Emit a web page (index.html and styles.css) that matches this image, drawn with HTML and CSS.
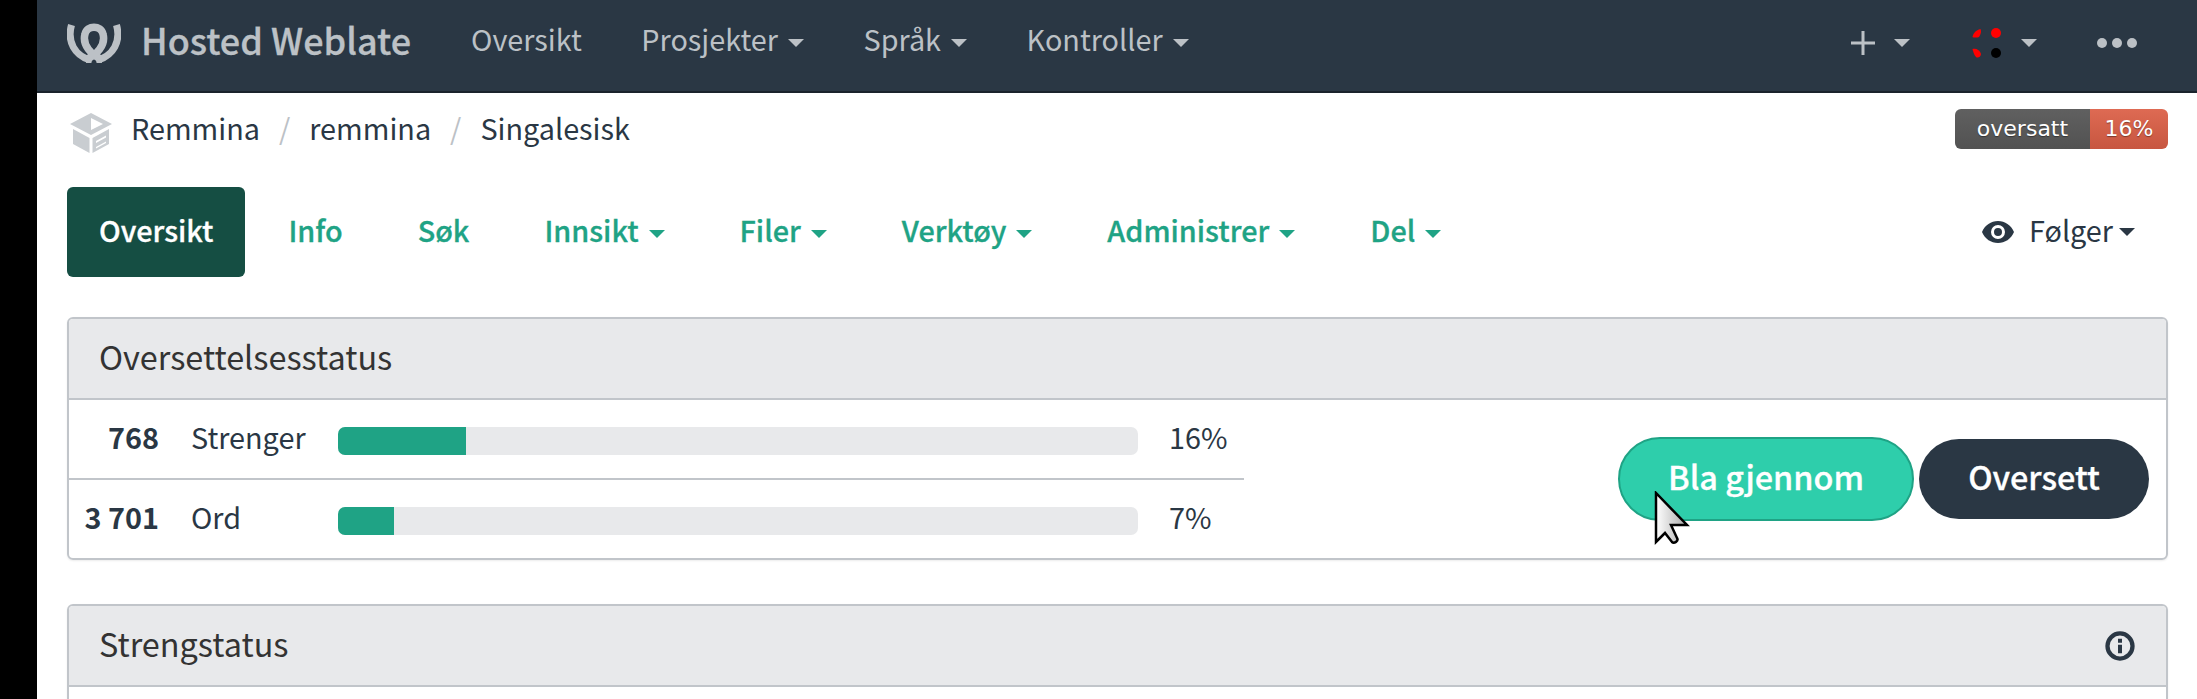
FILE: index.html
```html
<!DOCTYPE html>
<html lang="nb">
<head>
  <meta charset="UTF-8" />
  <title>Singalesisk - remmina - Hosted Weblate</title>
  <link rel="stylesheet" href="styles.css">
</head>
<body>
  <div class="page">
    <nav class="navbar">
      <a class="brand">
        <svg class="brand-logo" viewBox="0 0 54 40" width="54" height="40">
          <g fill="none" stroke="#bcc1c6" stroke-linecap="butt">
            <path d="M4.500 2C0 18 7 33 25 37.500" stroke-width="7"/>
            <path d="M49.500 2C54 18 47 33 29 37.500" stroke-width="7"/>
            <path d="M36 37C24 32 15 22 18 11C20 2 34 2 36 11C39 22 30 32 18 37" stroke-width="7.500"/>
          </g>
        </svg>
        <span>Hosted Weblate</span>
      </a>
      <ul class="nav-links">
        <li>Oversikt</li>
        <li>Prosjekter<i class="caret"></i></li>
        <li>Språk<i class="caret"></i></li>
        <li>Kontroller<i class="caret"></i></li>
      </ul>
      <div class="nav-right">
        <div class="nav-add">
          <svg viewBox="0 0 24 24" width="24" height="24"><path d="M10.500 0h3v10.500H24v3H13.500V24h-3V13.500H0v-3h10.500z" fill="#bcc1c6"/></svg>
          <i class="caret"></i>
        </div>
        <div class="nav-user">
          <svg viewBox="0 0 30 30" width="30" height="30">
            <path d="M8.500 1C9.500 3 9 6 7 9C5 10 1 9.500 0.500 9C1 5.500 4 2 8.500 1Z" fill="#f00"/>
            <circle cx="24" cy="5" r="5" fill="#f00"/>
            <path d="M0.500 21C4 20 8 22 9 26C8.500 30 5 30 4 29C2 27 1 23 0.500 21Z" fill="#f00"/>
            <circle cx="24" cy="25" r="5" fill="#000"/>
          </svg>
          <i class="caret"></i>
        </div>
        <div class="nav-dots"><b></b><b></b><b></b></div>
      </div>
    </nav>

    <div class="crumbs">
      <svg class="crumb-icon" viewBox="0 0 42 40" width="42" height="40">
        <path d="M21 0L42 11L21 22L0 11Z M21 5V17L33 11Z" fill="#c9cdd1" fill-rule="evenodd"/>
        <path d="M3 16L19.500 25V40L3 31Z" fill="#c9cdd1"/>
        <path d="M22.500 25L39 16V31L22.500 40Z M26 28V30L36 24.500V22.500Z M26 34V35.500L36 30V28.500Z" fill="#c9cdd1" fill-rule="evenodd"/>
      </svg>
      <span>Remmina</span><em>/</em><span>remmina</span><em>/</em><span>Singalesisk</span>
      <div class="badge"><span class="badge-label">oversatt</span><span class="badge-value">16%</span></div>
    </div>

    <div class="tabs">
      <a class="tab active"><span>Oversikt</span></a>
      <a class="tab"><span>Info</span></a>
      <a class="tab"><span>Søk</span></a>
      <a class="tab"><span>Innsikt</span><i class="caret"></i></a>
      <a class="tab"><span>Filer</span><i class="caret"></i></a>
      <a class="tab"><span>Verktøy</span><i class="caret"></i></a>
      <a class="tab"><span>Administrer</span><i class="caret"></i></a>
      <a class="tab"><span>Del</span><i class="caret"></i></a>
      <div class="watch">
        <svg viewBox="0 0 32 22" width="32" height="22"><path d="M16 0C9 0 3 4 0 11c3 7 9 11 16 11s13-4 16-11C29 4 23 0 16 0zm0 18a7 7 0 1 1 0-14 7 7 0 0 1 0 14zm0-11a4 4 0 1 0 0 8 4 4 0 0 0 0-8z" fill="#2a3744"/></svg>
        <span>Følger</span><i class="caret"></i>
      </div>
    </div>

    <section class="panel">
      <h2 class="panel-head"><span>Oversettelsesstatus</span></h2>
      <div class="panel-body">
        <div class="stats">
          <div class="stat-row">
            <b class="stat-num">768</b>
            <span class="stat-name">Strenger</span>
            <div class="bar"><div class="bar-fill" style="width:16%"></div></div>
            <span class="stat-pct">16%</span>
          </div>
          <div class="stat-row">
            <b class="stat-num">3 701</b>
            <span class="stat-name">Ord</span>
            <div class="bar"><div class="bar-fill" style="width:7%"></div></div>
            <span class="stat-pct">7%</span>
          </div>
        </div>
        <div class="actions">
          <a class="btn btn-browse"><span>Bla gjennom</span></a>
          <a class="btn btn-translate"><span>Oversett</span></a>
        </div>
      </div>
    </section>

    <section class="panel panel-open">
      <h2 class="panel-head"><span>Strengstatus</span>
        <svg class="info-icon" viewBox="0 0 24 24" width="32" height="32"><path d="M12 1a11 11 0 1 0 0 22 11 11 0 0 0 0-22zm0 3.200a7.800 7.800 0 1 1 0 15.600 7.800 7.800 0 0 1 0-15.600z" fill="#2a3744" fill-rule="evenodd"/><path d="M10.500 6.500h3v3h-3zM10.500 11h3v6.500h-3z" fill="#2a3744"/></svg>
      </h2>
    </section>
  </div>

  <svg class="cursor" viewBox="0 0 38 56" width="38" height="56">
    <defs><linearGradient id="cursor-fill" x1="0" y1="0" x2="1" y2="0"><stop offset="0" stop-color="#fff"/><stop offset="1" stop-color="#aaa"/></linearGradient></defs>
    <path d="M2 2V51L11 42L18 51C20 53 25 50 23 47L17 34H33Z" fill="url(#cursor-fill)" stroke="#000" stroke-width="2.500" stroke-linejoin="miter"/>
  </svg>
</body>
</html>
```

FILE: styles.css
```css
* {
  box-sizing: border-box;
  margin: 0;
  padding: 0;
}

html, body {
  height: 100%;
  overflow: hidden;
}

body {
  background: #000;
  padding-left: 37px;
  font-family: "Noto Sans CJK SC", "Noto Sans", sans-serif;
  font-size: 28.800px;
  line-height: 40px;
  color: #2a3744;
}

.page {
  background: #fff;
  height: 699px;
  overflow: hidden;
}

.caret {
  display: inline-block;
  width: 0;
  height: 0;
  margin-left: 10px;
  vertical-align: 4px;
  border-top: 8px solid currentColor;
  border-left: 8px solid transparent;
  border-right: 8px solid transparent;
}

/* top bar */
.navbar {
  display: flex;
  align-items: center;
  height: 93px;
  padding: 0 60px 5px 30px;
  background: #2a3744;
  border-bottom: 2px solid #1a232c;
  color: #bcc1c6;
}

.brand {
  display: flex;
  align-items: center;
  gap: 20px;
  font-size: 36px;
  font-weight: 500;
  -webkit-text-stroke: 0.3px #bcc1c6;
}

.brand span {
  padding-bottom: 8px;
}

.brand-logo {
  display: block;
}

.nav-links {
  display: flex;
  gap: 59.500px;
  margin-left: 60px;
  padding-bottom: 8px;
  list-style: none;
}

.nav-right {
  display: flex;
  align-items: center;
  margin-left: auto;
}

.nav-add, .nav-user {
  display: flex;
  align-items: center;
}

.nav-add .caret, .nav-user .caret {
  margin-left: 19px;
}

.nav-add {
  margin-right: 62px;
}

.nav-user {
  margin-right: 60px;
}

.nav-dots {
  display: flex;
  gap: 5px;
}

.nav-dots b {
  width: 10px;
  height: 10px;
  border-radius: 50%;
  background: #bcc1c6;
}

/* breadcrumbs */
.crumbs {
  display: flex;
  align-items: center;
  height: 80px;
  padding: 0 29px 0 33px;
}

.crumbs > span, .crumbs > em {
  padding-bottom: 10px;
}

.crumb-icon {
  margin-right: 19px;
}

.crumbs em {
  font-style: normal;
  color: #bcc1c6;
  margin: 0 19px;
}

.badge {
  display: flex;
  margin-left: auto;
  height: 40px;
  margin-top: -8px;
  border-radius: 6px;
  overflow: hidden;
  font-family: "DejaVu Sans", sans-serif;
  font-size: 22px;
  line-height: 40px;
  color: #fff;
  text-shadow: 0 1px 1px rgba(0, 0, 0, 0.4);
}

.badge-label {
  width: 135px;
  text-align: center;
  background: linear-gradient(#606060, #525252);
}

.badge-value {
  width: 78px;
  text-align: center;
  background: linear-gradient(#de6a53, #c75640);
}

/* tabs */
.tabs {
  display: flex;
  align-items: center;
  gap: 11px;
  margin: 14px 29px 0 30px;
  height: 90px;
  font-weight: 500;
  color: #1fa385;
}

.tab {
  padding: 0 32px;
  -webkit-text-stroke: 0.3px currentColor;
}

.tab span, .watch span {
  padding-bottom: 4px;
  display: inline-block;
}

.tab.active {
  display: flex;
  align-items: center;
  height: 90px;
  background: #154e43;
  color: #fff;
  border-radius: 6px;
}

.watch {
  display: flex;
  align-items: center;
  margin-left: auto;
  font-weight: 400;
  color: #2a3744;
  padding-right: 33px;
}

.watch span {
  margin-left: 15px;
}

.watch .caret {
  margin-left: 6px;
}

/* panels */
.panel {
  margin: 40px 29px 0 30px;
  border: 2px solid #c1c5ca;
  border-radius: 6px;
  box-shadow: 0 1px 2px rgba(0, 0, 0, 0.08);
}

.panel-open {
  margin-top: 44px;
  height: 200px;
}

.panel-head {
  display: flex;
  justify-content: space-between;
  align-items: center;
  height: 81px;
  padding: 0 30px;
  background: #e8e9eb;
  border-bottom: 2px solid #c1c5ca;
  border-radius: 4px 4px 0 0;
  font-size: 32.400px;
  font-weight: 400;
  color: #333;
}

.panel-head span {
  padding-bottom: 6px;
}

.panel-body {
  display: flex;
  align-items: center;
  justify-content: space-between;
  padding-right: 17px;
}

.stats {
  width: 1175px;
}

.stat-row {
  display: flex;
  align-items: center;
  height: 78px;
}

.stat-row + .stat-row {
  border-top: 2px solid #c1c5ca;
  height: 80px;
}

.stat-num {
  width: 90px;
  text-align: right;
  padding-bottom: 4px;
}

.stat-name {
  width: 147px;
  margin-left: 32px;
  padding-bottom: 4px;
}

.bar {
  width: 800px;
  height: 28px;
  margin-top: 4px;
  background: #e8e9eb;
  border-radius: 7px;
  overflow: hidden;
}

.bar-fill {
  height: 100%;
  background: #1fa385;
}

.stat-pct {
  margin-left: 31px;
  padding-bottom: 4px;
}

.actions {
  display: flex;
  align-items: center;
  gap: 5px;
}

.btn {
  display: flex;
  align-items: center;
  justify-content: center;
  border-radius: 42px;
  font-size: 32.400px;
  font-weight: 500;
  color: #fff;
  -webkit-text-stroke: 0.3px #fff;
}

.btn span {
  padding-bottom: 6px;
}

.btn-browse {
  width: 296px;
  height: 84px;
  background: #2eceab;
  border: 2px solid #1fa385;
}

.btn-translate {
  width: 230px;
  height: 80px;
  background: #2a3744;
}

.cursor {
  position: absolute;
  left: 1654px;
  top: 491px;
}
```
